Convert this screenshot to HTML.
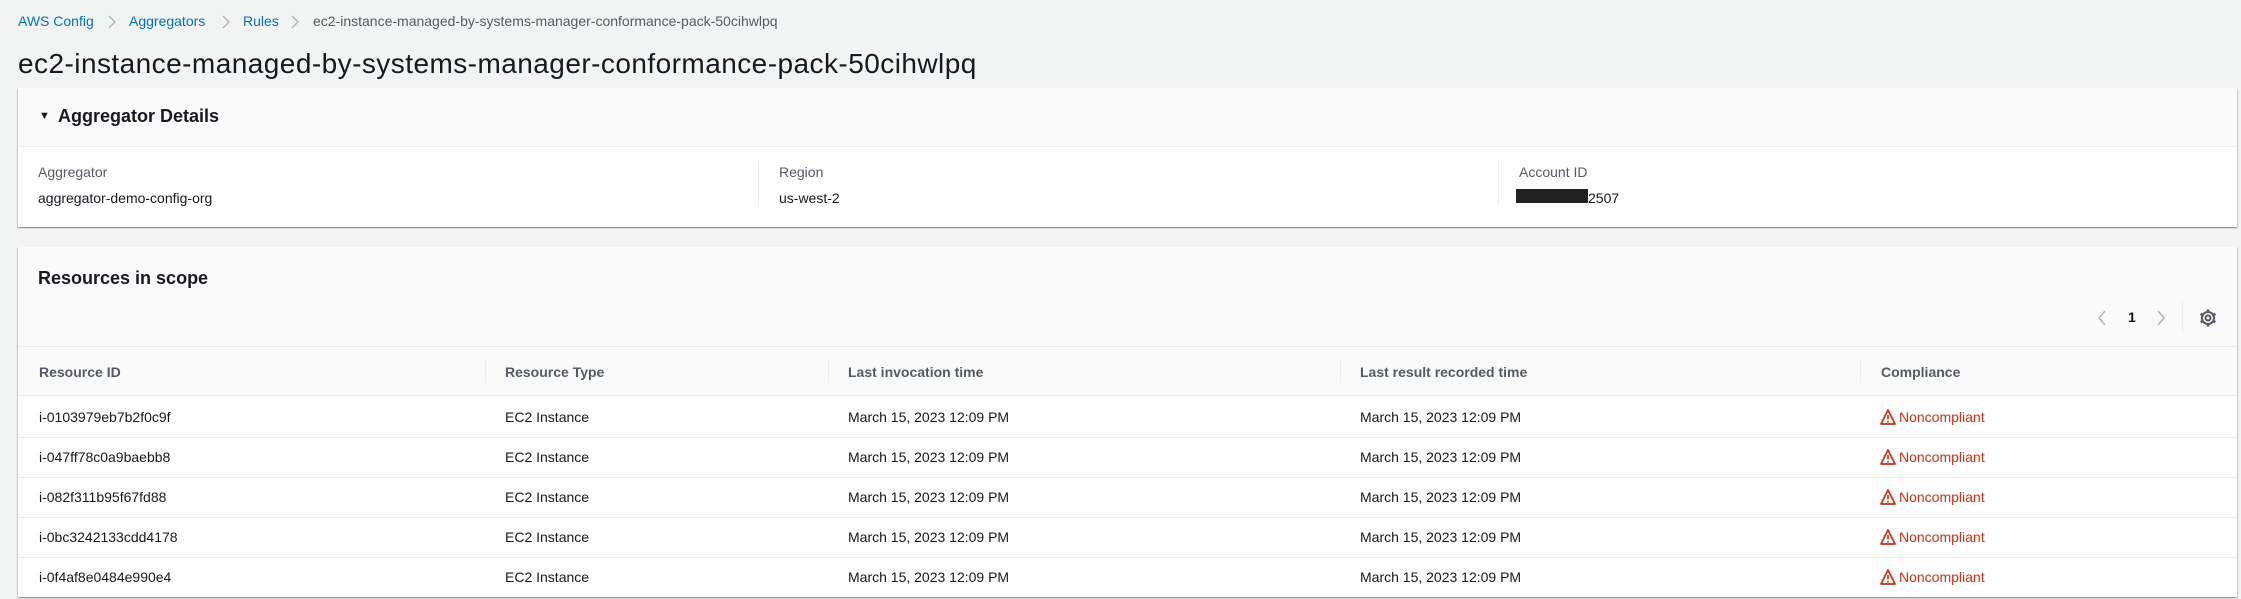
<!DOCTYPE html>
<html><head><meta charset="utf-8"><style>
*{box-sizing:border-box;margin:0;padding:0}
body{width:2241px;height:599px;background:#f2f3f3;font-family:"Liberation Sans",sans-serif;color:#16191f;position:relative;overflow:hidden;font-size:14px}
.a{position:absolute;white-space:nowrap}
.bc{top:13px;font-size:14px}
.lk{color:#0073bb}
.panel{position:absolute;left:18px;width:2219px;background:#fff;box-shadow:0 1px 1px rgba(0,28,36,.3),1px 1px 1px rgba(0,28,36,.15),-1px 1px 1px rgba(0,28,36,.15)}
.hl{position:absolute;left:0;right:0;height:1px;background:#eaeded}
.vl{position:absolute;width:1px;background:#eaeded}
.th{font-weight:bold;color:#545b64}
.nc{color:#d13212}
</style></head><body>
<div class="a bc lk" style="left:18px">AWS Config</div>
<svg class="a" style="left:107px;top:15px" width="10" height="14"><path d="M2 1 L8 7 L2 13" fill="none" stroke="#aab7b8" stroke-width="1.3"/></svg>
<div class="a bc lk" style="left:129px">Aggregators</div>
<svg class="a" style="left:221px;top:15px" width="10" height="14"><path d="M2 1 L8 7 L2 13" fill="none" stroke="#aab7b8" stroke-width="1.3"/></svg>
<div class="a bc lk" style="left:243px">Rules</div>
<svg class="a" style="left:290px;top:15px" width="10" height="14"><path d="M2 1 L8 7 L2 13" fill="none" stroke="#aab7b8" stroke-width="1.3"/></svg>
<div class="a bc" style="left:313px;color:#545b64">ec2-instance-managed-by-systems-manager-conformance-pack-50cihwlpq</div>
<div class="a" style="left:18px;top:48px;font-size:28px;letter-spacing:0.45px">ec2-instance-managed-by-systems-manager-conformance-pack-50cihwlpq</div>

<div class="panel" style="top:88px;height:139px">
 <div style="position:absolute;left:0;right:0;top:0;height:58px;background:#fafafa"></div>
 <div class="hl" style="top:58px"></div>
 <div class="a" style="left:21px;top:22px;font-size:11px">&#9660;</div>
 <div class="a" style="left:40px;top:18px;font-size:18px;font-weight:bold">Aggregator Details</div>
 <div class="a" style="left:20px;top:76px;color:#545b64">Aggregator</div>
 <div class="a" style="left:20px;top:102px">aggregator-demo-config-org</div>
 <div class="vl" style="left:740px;top:73px;height:44px"></div>
 <div class="a" style="left:761px;top:76px;color:#545b64">Region</div>
 <div class="a" style="left:761px;top:102px">us-west-2</div>
 <div class="vl" style="left:1480px;top:73px;height:44px"></div>
 <div class="a" style="left:1501px;top:76px;color:#545b64">Account ID</div>
 <div style="position:absolute;left:1498px;top:101px;width:72px;height:14px;background:#222"></div>
 <div class="a" style="left:1570px;top:102px">2507</div>
</div>

<div class="panel" style="top:247px;height:350px">
 <div style="position:absolute;left:0;right:0;top:0;height:149px;background:#fafafa"></div>
 <div class="a" style="left:20px;top:21px;font-size:18px;font-weight:bold">Resources in scope</div>
 <svg class="a" style="left:2078px;top:62px" width="12" height="18"><path d="M9 2 L3 9 L9 16" fill="none" stroke="#aab7b8" stroke-width="1.5"/></svg>
 <div class="a" style="left:2110px;top:62px;font-weight:bold">1</div>
 <svg class="a" style="left:2137px;top:62px" width="12" height="18"><path d="M3 2 L9 9 L3 16" fill="none" stroke="#aab7b8" stroke-width="1.5"/></svg>
 <div class="vl" style="left:2164px;top:55px;height:30px"></div>
 <svg class="a" style="left:2180px;top:61px" width="20" height="20" viewBox="0 0 20 20"><circle cx="10" cy="10" r="2.5" fill="none" stroke="#545b64" stroke-width="2"/><circle cx="10" cy="10" r="6" fill="none" stroke="#545b64" stroke-width="2"/><path d="M10 1.5V4.5M10 15.5V18.5M2.6 5.75L5.2 7.25M14.8 12.75L17.4 14.25M2.6 14.25L5.2 12.75M14.8 7.25L17.4 5.75" stroke="#545b64" stroke-width="2.6"/></svg>
 <div class="hl" style="top:99px"></div>
 <div class="hl" style="top:148px"></div>
 <div class="vl" style="left:467px;top:112px;height:24px"></div>
 <div class="vl" style="left:810px;top:112px;height:24px"></div>
 <div class="vl" style="left:1322px;top:112px;height:24px"></div>
 <div class="vl" style="left:1842px;top:112px;height:24px"></div>
 <div class="a th" style="left:21px;top:117px">Resource ID</div>
 <div class="a th" style="left:487px;top:117px">Resource Type</div>
 <div class="a th" style="left:830px;top:117px">Last invocation time</div>
 <div class="a th" style="left:1342px;top:117px">Last result recorded time</div>
 <div class="a th" style="left:1863px;top:117px">Compliance</div>
</div>
<div id="rows"></div>
<script>
var ids=["i-0103979eb7b2f0c9f","i-047ff78c0a9baebb8","i-082f311b95f67fd88","i-0bc3242133cdd4178","i-0f4af8e0484e990e4"];
var h="";
ids.forEach(function(id,i){var t=409+i*40;
if(i>0)h+='<div style="position:absolute;left:18px;width:2219px;top:'+(t-12)+'px;height:1px;background:#eaeded"></div>';
h+='<div class="a" style="left:39px;top:'+t+'px">'+id+'</div>';
h+='<div class="a" style="left:505px;top:'+t+'px">EC2 Instance</div>';
h+='<div class="a" style="left:848px;top:'+t+'px">March 15, 2023 12:09 PM</div>';
h+='<div class="a" style="left:1360px;top:'+t+'px">March 15, 2023 12:09 PM</div>';
h+='<svg class="a" style="left:1879px;top:'+(t-1)+'px" width="18" height="18" viewBox="0 0 18 18"><path d="M9 2 L16 16 L2 16 Z" fill="none" stroke="#d13212" stroke-width="1.8" stroke-linejoin="round"/><path d="M9 7 V11.5 M9 13 V14.5" stroke="#d13212" stroke-width="1.6"/></svg>';
h+='<div class="a nc" style="left:1899px;top:'+t+'px">Noncompliant</div>';});
document.getElementById("rows").innerHTML=h;
</script>
</body></html>
